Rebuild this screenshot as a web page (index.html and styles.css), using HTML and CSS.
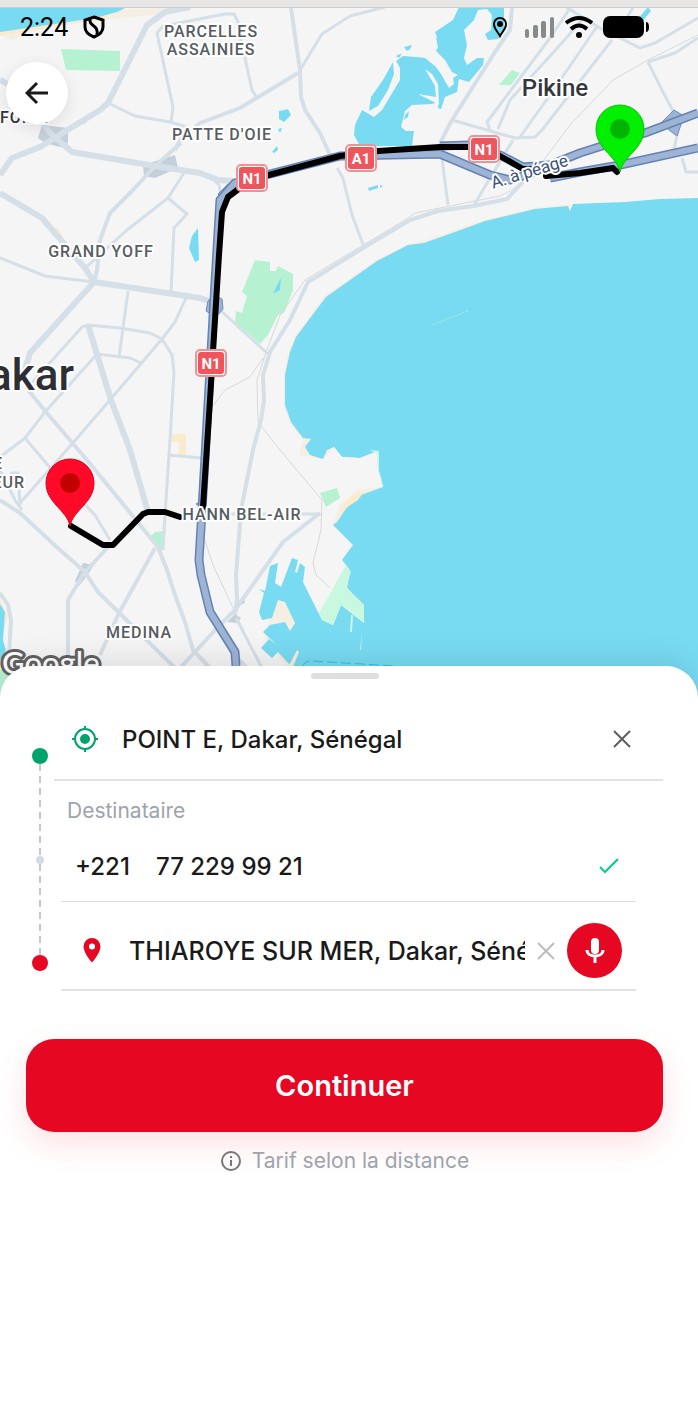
FILE: index.html
```html
<!DOCTYPE html>
<html lang="fr">
<head>
  <meta charset="UTF-8">
  <meta name="viewport" content="width=device-width, initial-scale=1">
  <title>Trajet - Dakar</title>
  <link rel="stylesheet" href="styles.css">
</head>
<body>
  <div class="app">
    <section class="map-area">
      <svg class="map" viewBox="0 0 698 704" preserveAspectRatio="xMidYMin slice" role="img" aria-label="Carte de Dakar">
        <defs>
          <path id="motorway" d="M236 666L235 652 210 612 201 575 199 560 202 510 206 440 214 300 220 200 235 183 340 156 440 154 490 175 510 180 535 172M440 146L470 145 500 155 523 167 550 165 580 153 605 145 645 133 698 113M550 178L580 172 620 165 698 148"/>
          <path id="pin" d="M0 43C-3 27-24 20-24 0A24 24 0 0 1 24 0C24 20 3 27 0 43Z"/>
        </defs>
        <!-- water -->
        <g class="beach">
          <path d="M0 28L110 10 190 7 160 14 105 20 50 27 20 35 12 41 0 34Z"/>
          <path class="sand" d="M0 30L95 16 105 12 107 18 50 27 0 36Z"/>
          <path class="sand" d="M171 434h15v24h-7v-16h-8zM51 230l6-2 6 8-2 5zM0 600l8 15-3 12-5 4z"/>
          <path d="M571 204L534 208 484 220 424 241 408 244 376 260 325 296 295 336 288 352 284 375 284 406 290 423 303 440 299 455 323 459 333 449 340 453 350 470 333 525 352 545 342 560 350 575 320 615 300 580 283 590 276 584 265 640 290 670Z"/>
        </g>
        <g class="water">
          <path d="M0 7H127L117 12 95 18 0 32Z"/>
          <path d="M459 7H504V30L498 39 488 40 485 34 491 30 492 15 487 9 478 10 474 20 464 30 467 45 464 58 467 65 477 58H484L483 65 469 82 459 79 457 92 445 97 441 109 438 108V102L432 104 412 105 405 111 401 127 406 131 414 131 412 146H360L354 135 355 125 362 110 374 117 382 110 400 80V68L396 61 403 56 420 57 434 52 438 48 435 32 453 20Z"/>
          <path d="M393 62L394 74 388 90 378 106 369 111 371 97 383 80Z"/>
          <path d="M404 47l8-2-4 8zM396 56l6-3-3 5zM414 50l9 1-3 4-7-1zM425 40l4-4 3 7-6 4z"/>
          <path d="M636 21l12-14 3 4-11 13z"/>
          <path d="M279 111l9-2 3 6-7 7-5-3zM278 129l4-1-2 5zM272 152l5-6 1 4-4 3zM368 188l10-3 0 3-9 3zM380 185l3 1-3 2z"/>
          <path d="M198 228L199 260 195 262 189 248 192 236Z"/>
          <path d="M698 198L660 199 625 202 573 204 570 211 568 206 535 209 485 221 455 232 424 243 408 245 377 261 326 297 296 337 290 352 285 375 285 405 291 422 303 438 311 439 305 447 310 455 323 459 327 450 334 447 342 457 360 458 378 451 378 470 383 487 358 496 345 510 337 522 333 525 353 545 342 560 350 570 347 588 364 605 364 623 341 605 333 625 322 620 303 582 305 567 300 563 297 573 295 572 298 560 292 558 281 587 275 583 278 563 270 566 265 591 259 589 264 593 259 612 262 620 272 618 278 600 285 602 295 623 290 631 285 622 270 625 263 632 277 645 269 639 261 648 272 658 278 652 290 665 290 704 698 704Z"/>
          <path d="M0 604L5 612 3 640 6 650 0 660Z"/>
        </g>
        <path class="land" d="M434 30L427 34 424 45 400 53 407 56 425 58 436 67 441 74 449 88 454 84 453 78 458 75 452 72 445 60 437 52 433 44 437 37Z"/>
        <path class="land" d="M425 69L432 74 438 84 439 105 434 102 418 94 436 97 435 86Z"/>
        <path class="water" d="M405 115l4-4-1 6-4 3z"/>
        <path class="sand" d="M338 513L350 496 365 490 358 500Z"/>
        <path class="beach" d="M297 650l2 2-6 15h-5z"/>
        <path class="land" d="M334 447L342 457 360 458 378 451 378 470 383 487 358 490 340 505 320 470Z"/>
        <!-- parks -->
        <g class="park">
          <path d="M61 49L120 51V71L66 70Z"/>
          <path d="M255 260L270 262 270 271 276 271 278 266 293 274 293 290 284 313 278 315 268 335 260 344 235 322 236 311 242 313 247 296 242 292Z"/>
          <path d="M320 493L337 488 340 498 326 507ZM163 531L162 551 150 537 155 532ZM512 70l8 3-9 12h-12z"/>
          <path d="M0 670l10-4v30H0z"/>
          <path class="park-light" d="M370 450l9 1v19l5 17-6-16-1-17z"/>
          <path class="park-light" d="M346 565L351 572 346 588 364 605 364 622 341 605 333 625 322 620 319 613Z"/>
          <path class="park-light" d="M353 615l-1 17h-2l1-17zM362 632l-1 18h-1z"/>
        </g>
        <path class="water" d="M281 278L280 290 273 294 276 287Z"/>
        <path class="shoal" d="M432 325L468 311"/>
        <path class="ferry" d="M303 668Q303 661 312 661L395 666"/>
        <!-- interchanges -->
        <g class="junction">
          <path d="M42 125L68 128 68 143 60 147 45 143 38 138ZM143 165L175 155 178 168 155 178 144 176ZM76 121l8-2 3 3-8 4z"/>
          <path d="M83 563l11 2-8 12-7 9-4-5zM227 622l8-8 6 4-4 5zM239 600l5-2 1 5-5 2z"/>
        </g>
        <!-- railway -->
        <g class="rail">
          <path d="M698 35L648 60 613 80 570 125 540 165 512 190 500 196 415 213 405 220 305 280 280 315 265 355 257 380 258 422 280 450 322 500 321 530 313 563 316 575 330 588"/>
          <path d="M263 358L250 377 225 390 212 407M204 538L213 565 235 612 260 666"/>
        </g>
        <!-- roads -->
        <g class="road">
          <path d="M108 103L135 116 170 122 190 128M171 122L173 107 157 33 163 26 225 14 234 14 238 22 241 40 252 90 257 98"/>
          <path d="M300 70L322 34 350 16 385 7M184 173L168 198 127 230 83 270M168 198L187 214 174 228 171 292"/>
          <path d="M212 178L219 185 222 200M0 258L45 276 94 282M218 308L268 354M128 291L119 357"/>
          <path d="M186 298L175 322 162 339 110 400 65 452 20 503"/>
          <path d="M30 385L82 327 88 325 120 328 150 333 162 339 172 355 174 372 170 440 165 515 163 550"/>
          <path d="M97 354L45 412 25 438 0 457M97 354L130 358 141 363M25 438L52 470 95 515 110 540M168 455L202 458"/>
          <path d="M208 514H320M337 168L343 178 352 215 364 247M440 143L448 205"/>
          <path d="M452 120L515 138 535 137 542 130 612 40M570 8L550 38 487 122 490 130M582 20L560 45 510 100 498 129M598 25L550 95 520 137"/>
          <path d="M566 7L600 28 640 48 655 43 698 18M633 8L620 28M648 62L675 53 698 38M648 62L662 90 674 113 678 130 673 155M682 158L686 172H698M513 140L474 205"/>
          <path d="M0 470L15 500 22 510M10 473h8l2 32M236 618L262 668"/>
        </g>
        <g class="road road-mid">
          <path d="M291 8L300 70 301 97 305 110 320 133 330 155M512 8L510 30 495 52 452 120 440 143"/>
          <path d="M175 150L180 140 200 123 240 108 298 73M181 143L155 166 133 190 110 213 100 240 97 270 94 282"/>
          <path d="M523 182L507 199 473 206 438 211 410 220 363 248 308 282 290 320 270 352 263 375 264 400 261 420 253 450 241 510 236 575 237 600 235 615"/>
          <path d="M28 390L46 412 75 446 92 466 158 547 167 570 175 595 185 622 193 650 212 670"/>
          <path d="M0 500L20 513 60 550 85 572 98 592 175 668M110 545L85 572 68 600V660M155 548L118 615 100 655M0 593L8 605 11 620 9 655M320 513L283 542 235 610 220 625 180 668M235 655l12 13"/>
        </g>
        <g class="road road-big">
          <path d="M190 7L165 12 147 25 108 103 100 110 40 147 12 158 0 175M0 80L20 90 50 133 72 152 155 166 200 173 218 180 235 181"/>
          <path d="M0 193L42 218 85 268 94 282 200 298 212 302M94 282L30 353 25 370M88 325L111 400 130 450 148 512"/>
        </g>
        <!-- motorway -->
        <path class="motorway-link" d="M208 301l6-6 8 4 1 10-7 8-10-6zM662 122l12-12 10 6-7 20-8-6zM218 194l10-10 14-2-20 16zM196 504l8-5v10z"/>
        <use class="motorway-edge" href="#motorway"/>
        <use class="motorway-core" href="#motorway"/>
        <!-- route -->
        <path class="route" d="M617 172L613 168 580 173 546 176M530 169L523 169 500 156 486 147 440 147 378 151 340 156 265 176 240 188 228 197 222 212 219 255 210 400 203 507M180 517L165 512H148L143 514 113 545H103L71 526"/>
        <!-- road shields -->
        <g class="shield">
          <g transform="translate(252 178)"><rect class="shield-edge" x="-15" y="-13" width="30" height="26" rx="4"/><rect class="shield-fill" x="-13" y="-11" width="26" height="22" rx="3"/><text y="6">N1</text></g>
          <g transform="translate(361 158)"><rect class="shield-edge" x="-15" y="-13" width="30" height="26" rx="4"/><rect class="shield-fill" x="-13" y="-11" width="26" height="22" rx="3"/><text y="6">A1</text></g>
          <g transform="translate(484 149)"><rect class="shield-edge" x="-15" y="-13" width="30" height="26" rx="4"/><rect class="shield-fill" x="-13" y="-11" width="26" height="22" rx="3"/><text y="6">N1</text></g>
          <g transform="translate(211 363)"><rect class="shield-edge" x="-15" y="-13" width="30" height="26" rx="4"/><rect class="shield-fill" x="-13" y="-11" width="26" height="22" rx="3"/><text y="6">N1</text></g>
        </g>
        <!-- place names -->
        <g class="label">
          <text x="211" y="37">PARCELLES</text>
          <text x="211" y="55">ASSAINIES</text>
          <text x="222" y="140">PATTE D'OIE</text>
          <text x="101" y="257">GRAND YOFF</text>
          <text x="242" y="520">HANN BEL-AIR</text>
          <text x="139" y="638">MEDINA</text>
          <text class="start dark" x="0" y="123">FOIRE</text>
          <text class="end" x="25" y="488">EUR</text>
          <text class="end" x="3" y="469">E</text>
          <text class="town" x="555" y="96">Pikine</text>
          <text class="city" x="74" y="390">Dakar</text>
          <text class="toll" transform="translate(531 177) rotate(-17)">A. à péage</text>
        </g>
        <text class="google" x="2" y="674">Google</text>
        <!-- pins -->
        <g class="pin-start" transform="translate(620 129)">
          <use href="#pin"/><circle r="10"/>
        </g>
        <g class="pin-end" transform="translate(70 483)">
          <use href="#pin"/><circle r="10"/>
        </g>
      </svg>

      <div class="overlay">
        <div class="top-strip"></div>
        <header class="status-bar">
          <span class="time">2:24</span>
          <svg class="shield-icon" width="22" height="24" viewBox="0 0 22 24"><path d="M11 2L20 5V12C20 17 16 20 11 22 6 20 2 17 2 12V5Z"/><path d="M7 3C5 12 16 9 14 20"/></svg>
          <div class="indicators">
            <svg width="18" height="24" viewBox="0 0 18 24"><path class="place" d="M9 21C7 17 3 14 3 9A6 6 0 0 1 15 9C15 14 11 17 9 21Z"/><circle cx="9" cy="9" r="3"/></svg>
            <svg class="signal" width="30" height="24" viewBox="0 0 30 24"><rect y="14" width="4" height="9" rx="2"/><rect x="8" y="10" width="5" height="13" rx="2"/><rect x="16" y="6" width="5" height="17" rx="2"/><rect x="25" y="2" width="4" height="21" rx="2"/></svg>
            <svg class="wifi" width="28" height="24" viewBox="0 0 28 24"><path d="M1 8Q14-2 27 8M6 14Q14 7 22 14"/><circle cx="14" cy="20" r="3"/></svg>
            <svg width="46" height="24" viewBox="0 0 46 24"><rect y="1" width="41" height="22" rx="7"/><path d="M43 7Q46 7 46 12T43 17Z"/></svg>
          </div>
        </header>
        <button class="back" type="button" aria-label="Retour">
          <svg width="24" height="24" viewBox="0 0 24 24"><path d="M23 12H2M12 2L2 12 12 22"/></svg>
        </button>
      </div>
    </section>

    <main class="sheet">
      <div class="handle"></div>
      <form class="trip">
        <div class="stops">
          <div class="timeline">
            <span class="dot dot-start"></span>
            <span class="dash"></span>
            <span class="dot dot-mid"></span>
            <span class="dash"></span>
            <span class="dot dot-end"></span>
          </div>
          <div class="fields">
            <div class="row row-pickup">
              <svg class="target" width="28" height="28" viewBox="0 0 28 28"><circle class="ring" cx="14" cy="14" r="10"/><circle cx="14" cy="14" r="4"/><path d="M14 1V4M14 24V27M1 14H4M24 14H27"/></svg>
              <input class="text" type="text" value="POINT E, Dakar, Sénégal" aria-label="Point de départ">
              <button class="icon-btn" type="button" aria-label="Effacer le départ">
                <svg width="18" height="18" viewBox="0 0 18 18"><path d="M1 1L17 17M17 1L1 17"/></svg>
              </button>
            </div>
            <div class="details">
              <label class="caption" for="phone">Destinataire</label>
              <div class="row row-phone">
                <span class="prefix">+221</span>
                <input class="text" id="phone" type="tel" value="77 229 99 21">
                <svg class="check" width="22" height="18" viewBox="0 0 22 18"><path d="M2 10L7 15 20 2"/></svg>
              </div>
              <div class="row row-dest">
                <svg class="pin-icon" width="18" height="25" viewBox="0 0 18 25"><path fill-rule="evenodd" d="M9 0A8.500 8.500 0 0 0 .5 8.500C.5 15 9 24.500 9 24.500S17.500 15 17.500 8.500A8.500 8.500 0 0 0 9 0ZM9 5.500A3 3 0 1 1 9 11.500 3 3 0 0 1 9 5.500Z"/></svg>
                <input class="text" type="text" value="THIAROYE SUR MER, Dakar, Sénégal" aria-label="Destination">
                <button class="icon-btn light" type="button" aria-label="Effacer la destination">
                  <svg width="18" height="18" viewBox="0 0 18 18"><path d="M1 1L17 17M17 1L1 17"/></svg>
                </button>
                <button class="mic" type="button" aria-label="Dicter">
                  <svg width="20" height="26" viewBox="0 0 20 26"><rect x="6" y="0" width="8" height="16" rx="4"/><path d="M2 12C2 20 18 20 18 12M10 18V25"/></svg>
                </button>
              </div>
            </div>
          </div>
        </div>
        <button class="submit" type="submit">Continuer</button>
        <p class="hint">
          <svg width="22" height="22" viewBox="0 0 22 22"><circle cx="11" cy="11" r="9"/><path d="M11 10V16M11 6V8"/></svg>
          Tarif selon la distance
        </p>
      </form>
    </main>
  </div>
</body>
</html>
```
FILE: styles.css
```css
* {
  box-sizing: border-box;
}
body {
  margin: 0;
  background: #fff;
  color: #1a1a1a;
  font-family: Inter, "Open Sans", sans-serif;
}
button, input {
  font: inherit;
  color: inherit;
  border: none;
  background: none;
  padding: 0;
}
button {
  cursor: pointer;
}
svg {
  display: block;
  flex: none;
}
.app {
  min-height: 100vh;
  display: flex;
  flex-direction: column;
}

/* map */
.map-area {
  position: relative;
  height: 704px;
  background: #f5f5f5;
  overflow: hidden;
}
.map {
  width: 100%;
  height: 100%;
}
.land { fill: #f5f5f5; }
.water { fill: #78dbf2; }
.beach { fill: #f5eee3; }
.sand { fill: #fbebcd; }
.park { fill: #b6f2d2; }
.park-light { fill: #c9f8e0; }
.junction { fill: #c5cfda; }
.shoal {
  stroke: #a5e8df;
  stroke-dasharray: 3 1;
}
.ferry {
  fill: none;
  stroke: #28c3e2;
  stroke-dasharray: 10 4;
}
.rail, .road, .motorway-edge, .motorway-core, .route {
  fill: none;
  stroke-linejoin: round;
}
.rail {
  stroke: #d8d8d8;
  stroke-width: 1;
}
.road {
  stroke: #d5dfe7;
  stroke-width: 3;
}
.road-mid { stroke-width: 4; }
.road-big { stroke-width: 6; }
.motorway-link {
  fill: #9db4d5;
  stroke: #6f8cba;
}
.motorway-edge {
  stroke: #6382b5;
  stroke-width: 9;
}
.motorway-core {
  stroke: #9db4d5;
  stroke-width: 6;
}
.route {
  stroke: #000;
  stroke-width: 6;
  stroke-linecap: round;
}
.shield text {
  fill: #fff;
  font: 700 15px Roboto, sans-serif;
  text-anchor: middle;
}
.shield-edge {
  fill: #fff;
  stroke: #ee9295;
  stroke-width: 2;
}
.shield-fill { fill: #ee555d; }
.label text {
  font: 500 16px Roboto, sans-serif;
  letter-spacing: 1px;
  text-anchor: middle;
  fill: #575c62;
  stroke: #fff;
  stroke-width: 4;
  stroke-linejoin: round;
  paint-order: stroke;
}
.label .start { text-anchor: start; }
.label .end { text-anchor: end; }
.label .dark { fill: #35363c; }
.label .town {
  font-size: 24px;
  letter-spacing: 0;
  fill: #35363c;
}
.label .city {
  font-size: 44px;
  letter-spacing: 0;
  text-anchor: end;
  fill: #2e2f35;
}
.label .toll {
  font-size: 17px;
  font-weight: 400;
  letter-spacing: 0;
  fill: #3a5078;
}
.google {
  font: 500 31px Lato, sans-serif;
  fill: #fff;
  stroke: #626262;
  stroke-width: 6;
  stroke-linejoin: round;
  paint-order: stroke;
}
.pin-start {
  fill: #00f000;
  stroke: #00c800;
}
.pin-start circle {
  fill: #00b400;
  stroke: none;
}
.pin-end {
  fill: #ff0a28;
  stroke: #d8001c;
}
.pin-end circle {
  fill: #c30000;
  stroke: none;
}

/* over the map */
.overlay {
  position: absolute;
  top: 0;
  left: 0;
  right: 0;
}
.top-strip {
  height: 8px;
  background: #e7e6e4;
  border-bottom: 1px solid #cbcbcb;
}
.status-bar {
  display: flex;
  align-items: center;
  height: 38px;
  padding: 0 49px 0 20px;
}
.time {
  font: 25px Roboto, sans-serif;
  color: #000;
}
.shield-icon {
  margin-left: 15px;
  fill: none;
  stroke: #000;
  stroke-width: 3;
}
.indicators {
  display: flex;
  align-items: center;
  gap: 10px;
  margin-left: auto;
}
.place {
  fill: none;
  stroke: #000;
  stroke-width: 2;
}
.signal {
  margin-left: 6px;
  fill: #87898a;
}
.wifi path {
  fill: none;
  stroke: #000;
  stroke-width: 4;
}
.back {
  display: flex;
  align-items: center;
  justify-content: center;
  width: 62px;
  height: 62px;
  margin: 16px 0 0 6px;
  border-radius: 50%;
  background: #fff;
  box-shadow: 0 4px 16px rgba(0, 0, 0, 0.1);
}
.back path {
  fill: none;
  stroke: #1a1a1a;
  stroke-width: 3;
}

/* bottom sheet */
.sheet {
  position: relative;
  flex: 1;
  margin-top: -38px;
  padding: 7px 35px 40px 26px;
  border-radius: 32px 32px 0 0;
  background: #fff;
  box-shadow: 0 -6px 32px rgba(0, 0, 0, 0.1);
}
.handle {
  width: 68px;
  height: 6px;
  margin: 0 auto 20px;
  border-radius: 3px;
  background: #dedede;
}
.stops {
  display: flex;
  gap: 6px;
  padding-left: 6px;
}
.timeline {
  display: flex;
  flex-direction: column;
  align-items: center;
  width: 16px;
  padding: 49px 0 20px;
}
.dot {
  width: 16px;
  height: 16px;
  border-radius: 50%;
}
.dot-start { background: #00a36c; }
.dot-mid {
  width: 8px;
  height: 8px;
  background: #d5d9e2;
}
.dot-end { background: #e60722; }
.dash {
  flex: 1;
  width: 2px;
  background: repeating-linear-gradient(#c8c8c8 0 7px, #fff 7px 12px);
}
.fields {
  flex: 1;
  min-width: 0;
}
.row {
  display: flex;
  align-items: center;
}
.text {
  flex: 1;
  min-width: 0;
  height: 40px;
  font-size: 24px;
  font-weight: 500;
  outline: none;
}
.row-pickup {
  height: 82px;
  padding: 0 32px 0 17px;
  border-bottom: 2px solid #e2e2e2;
}
.row-pickup .text {
  margin-left: 23px;
}
.target {
  fill: #00a36c;
  stroke: #00a36c;
  stroke-width: 2;
}
.target .ring {
  fill: none;
}
.icon-btn path {
  fill: none;
  stroke: #5c5c5c;
  stroke-width: 2;
}
.icon-btn.light path {
  stroke: #bdbdbd;
}
.details {
  margin: 0 27px 0 7px;
}
.caption {
  display: block;
  padding: 18px 0 0 6px;
  font-size: 21px;
  line-height: 24px;
  color: #9ea3ae;
}
.row-phone {
  height: 79px;
  padding: 8px 16px 0 14px;
  border-bottom: 1px solid #dcdcdc;
}
.prefix {
  width: 81px;
  font-size: 24px;
  font-weight: 500;
}
.check path {
  fill: none;
  stroke: #00cf92;
  stroke-width: 2;
}
.row-dest {
  height: 89px;
  padding: 10px 14px 0 22px;
  border-bottom: 2px solid #e2e2e2;
}
.row-dest .text {
  margin: 0 12px 0 28px;
  font-size: 25px;
}
.pin-icon {
  fill: #e60722;
}
.mic {
  display: flex;
  align-items: center;
  justify-content: center;
  width: 55px;
  height: 55px;
  margin-left: 12px;
  border-radius: 50%;
  background: #e60722;
}
.mic rect { fill: #fff; }
.mic path {
  fill: none;
  stroke: #fff;
  stroke-width: 3;
}
.submit {
  display: block;
  width: 100%;
  height: 93px;
  margin-top: 48px;
  border-radius: 28px;
  background: #e60722;
  color: #fff;
  font-size: 29px;
  font-weight: 600;
  box-shadow: 0 12px 32px rgba(230, 7, 34, 0.12);
}
.hint {
  display: flex;
  align-items: center;
  justify-content: center;
  gap: 10px;
  margin: 17px 0 0;
  font-size: 21px;
  line-height: 24px;
  color: #9ea3ae;
}
.hint svg {
  fill: none;
  stroke: #777;
  stroke-width: 2;
}
```
